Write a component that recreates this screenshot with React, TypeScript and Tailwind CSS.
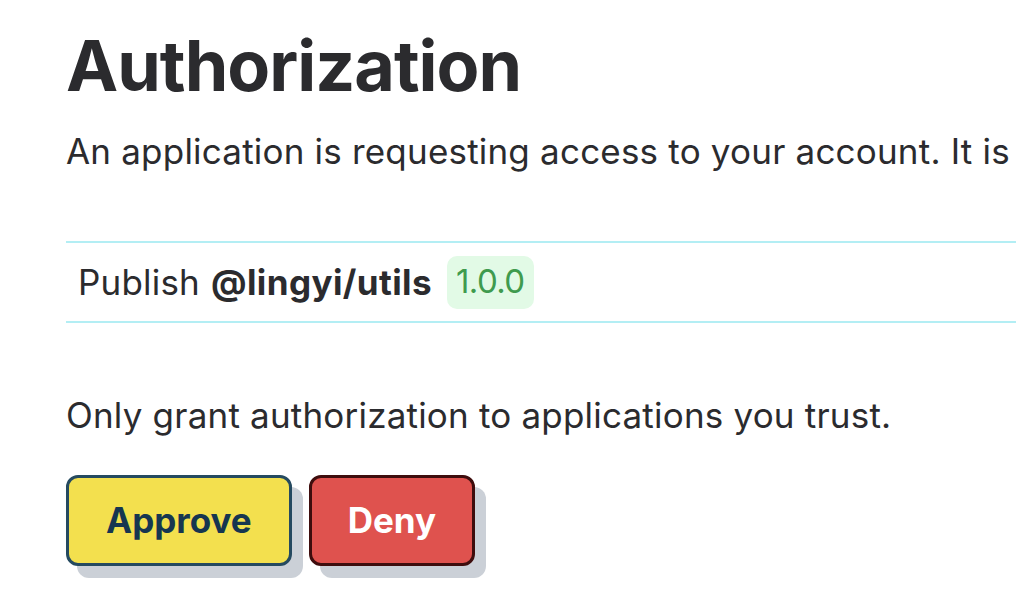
import React from "react";

export default function App() {
  return (
    <div className="w-[1016px] h-[602px] overflow-hidden bg-white text-[#2b2b2e]" style={{ fontFamily: "Inter, 'Noto Sans', sans-serif" }}>
      <div className="w-[1600px] pl-[66px] pt-[22px]">
        <h1 className="text-[70px] leading-[88px] font-bold tracking-[-1px]">Authorization</h1>
        <p className="mt-[17px] text-[35px] leading-[48px] tracking-[0.2px] whitespace-nowrap">
          An application is requesting access to your account. It is
        </p>
        <div className="mt-[66px] border-t-2 border-b-2 border-[#b3eef4] h-[82px] flex items-center pl-[12px] text-[35px]">
          <span className="tracking-[0.2px]">Publish</span>
          <span className="ml-[11px] font-bold tracking-[0.4px]">@lingyi/utils</span>
          <span className="ml-[15px] bg-[#e2fae6] text-[#3f9b4e] rounded-[10px] px-[9px] h-[53px] flex items-center text-[33px] tracking-[-0.6px]">1.0.0</span>
        </div>
        <p className="mt-[68px] text-[35px] leading-[48px] tracking-[0.2px] whitespace-nowrap">Only grant authorization to applications you trust.</p>
        <div className="mt-[36px] flex gap-[17px]">
          <button className="h-[91px] px-[37px] rounded-[12px] border-[3px] border-[#254a60] bg-[#f3e04e] text-[#163650] font-bold text-[35px] shadow-[11px_12px_0_0_#cbd0d7]">Approve</button>
          <button className="h-[91px] px-[36px] rounded-[12px] border-[3px] border-[#3e0d0d] bg-[#df524e] text-white font-bold text-[35px] shadow-[11px_12px_0_0_#cbd0d7]">Deny</button>
        </div>
      </div>
    </div>
  );
}
